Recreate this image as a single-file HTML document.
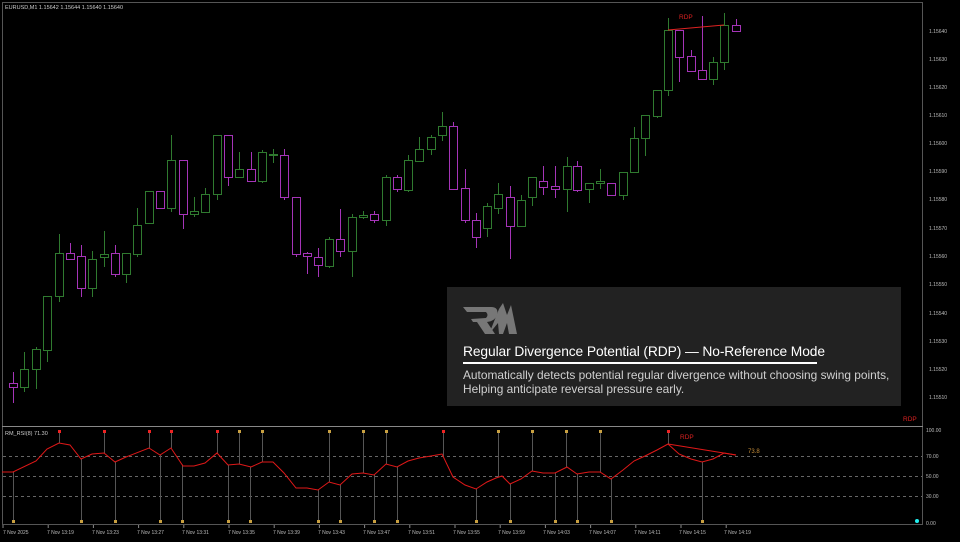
<!DOCTYPE html>
<html><head><meta charset="utf-8"><style>
body{margin:0;background:#000;width:960px;height:542px;overflow:hidden;font-family:"Liberation Sans",sans-serif}
svg{position:absolute;left:0;top:0}
.box{position:absolute;left:447px;top:287px;width:454px;height:119px;background:#222}
.t{position:absolute;left:16px;top:57px;color:#fff;font-size:13.8px;letter-spacing:-0.1px;white-space:nowrap}
.u{position:absolute;left:16px;top:75px;width:354px;height:2px;background:#fff}
.d{position:absolute;left:16px;top:81px;color:#d0d0d0;font-size:11.9px;line-height:14px;white-space:nowrap}
</style></head><body>
<svg id="s" width="960" height="542" font-family="Liberation Sans, sans-serif">
<rect x="2.5" y="2.5" width="920" height="522" fill="none" stroke="#555"/>
<line x1="2" y1="426.5" x2="923" y2="426.5" stroke="#888"/>
<text x="5" y="9" fill="#ccc" font-size="5.5">EURUSD,M1  1.15642 1.15644 1.15640 1.15640</text>
<text x="5" y="435" fill="#ccc" font-size="5.5">RM_RSI(8) 71.30</text>
<g fill="#bbb" font-size="5">
<text x="929" y="33">1.15640</text><text x="929" y="61">1.15630</text><text x="929" y="89">1.15620</text><text x="929" y="117">1.15610</text><text x="929" y="145">1.15600</text><text x="929" y="173">1.15590</text><text x="929" y="201">1.15580</text><text x="929" y="230">1.15570</text><text x="929" y="258">1.15560</text><text x="929" y="286">1.15550</text><text x="929" y="315">1.15540</text><text x="929" y="343">1.15530</text><text x="929" y="371">1.15520</text><text x="929" y="399">1.15510</text>
<text x="926" y="432">100.00</text><text x="926" y="458">70.00</text><text x="926" y="478">50.00</text><text x="926" y="498">30.00</text><text x="926" y="525">0.00</text>
<text x="3" y="534">7 Nov 2025</text><text x="47" y="534">7 Nov 13:19</text><text x="92" y="534">7 Nov 13:23</text><text x="137" y="534">7 Nov 13:27</text><text x="182" y="534">7 Nov 13:31</text><text x="228" y="534">7 Nov 13:35</text><text x="273" y="534">7 Nov 13:39</text><text x="318" y="534">7 Nov 13:43</text><text x="363" y="534">7 Nov 13:47</text><text x="408" y="534">7 Nov 13:51</text><text x="453" y="534">7 Nov 13:55</text><text x="498" y="534">7 Nov 13:59</text><text x="543" y="534">7 Nov 14:03</text><text x="589" y="534">7 Nov 14:07</text><text x="634" y="534">7 Nov 14:11</text><text x="679" y="534">7 Nov 14:15</text><text x="724" y="534">7 Nov 14:19</text>
</g>
<g stroke="#666" stroke-dasharray="3,3"><line x1="3" y1="456.5" x2="922" y2="456.5"/><line x1="3" y1="476.5" x2="922" y2="476.5"/><line x1="3" y1="496.5" x2="922" y2="496.5"/></g>
<g id="c"></g>
<line x1="668" y1="30" x2="724" y2="25" stroke="#d22" stroke-width="1"/>
<text x="679" y="19" fill="#d22" font-size="6.5">RDP</text>
<text x="903" y="421" fill="#d22" font-size="6.5">RDP</text>
<text x="680" y="439" fill="#d22" font-size="6.5">RDP</text>
<text x="748" y="453" fill="#c9903a" font-size="6">73.8</text>
<circle cx="917" cy="521" r="2" fill="#2ee"/>
</svg>
<div class="box">
<svg width="60" height="36" style="left:14px;top:14px"><g fill="#777"><path d="M2 6 L30 6 Q38 6 36 14 Q34 20 26 21 L34 33 L24 33 L16 21 L12 21 L10 18 L25 17 Q28 14 25 11 L6 11 Z"/><path d="M28 33 L38 8 L42 2 L46 14 L50 4 L56 33 L48 33 L46 22 L42 33 L38 33 L37 22 Z"/></g></svg>
<div class="t">Regular Divergence Potential (RDP) — No-Reference Mode</div>
<div class="u"></div>
<div class="d">Automatically detects potential regular divergence without choosing swing points,<br>Helping anticipate reversal pressure early.</div>
</div>
<script>
var C=[[13,383,387,372,403,0],[24,369,387,352,392,1],[36,349,369,347,389,1],[47,296,350,296,362,1],[59,253,296,234,302,1],[70,253,259,243,259,0],[81,256,288,245,297,0],[92,259,288,251,297,1],[104,254,257,231,267,1],[115,253,274,245,277,0],[126,253,274,253,283,1],[137,225,254,208,257,1],[149,191,223,191,223,1],[160,191,208,191,208,0],[171,160,208,135,212,1],[183,160,214,160,229,0],[194,211,214,197,217,1],[205,194,212,188,212,1],[217,135,194,135,200,1],[228,135,177,135,186,0],[239,169,177,152,177,1],[251,169,181,152,181,0],[262,152,181,150,183,1],[273,154,155,149,163,1],[284,155,197,149,200,0],[296,197,254,197,257,0],[307,253,256,252,274,0],[318,257,265,248,277,0],[329,239,266,237,268,1],[340,239,251,209,257,0],[352,217,251,214,277,1],[363,215,217,211,219,1],[374,214,220,211,223,0],[386,177,220,175,226,1],[397,177,189,175,192,0],[408,160,190,155,192,1],[419,149,161,137,161,1],[431,137,149,135,155,1],[442,126,135,112,141,1],[453,126,189,122,189,0],[465,188,220,169,223,0],[476,220,237,213,248,0],[487,206,228,203,237,1],[498,194,208,183,214,1],[510,197,226,186,259,0],[521,200,226,195,226,1],[532,177,197,177,206,1],[543,181,187,166,195,0],[555,186,189,166,198,0],[567,166,189,157,212,1],[577,166,190,161,192,0],[589,183,189,183,203,1],[600,181,183,169,189,1],[611,183,195,183,195,0],[623,172,195,172,200,1],[634,138,172,127,172,1],[645,115,138,115,156,1],[657,90,116,90,118,1],[668,30,90,18,96,1],[679,30,57,30,82,0],[691,56,71,50,71,0],[702,70,79,16,79,0],[713,62,79,57,85,1],[724,25,62,13,70,1],[736,25,31,19,31,0]];
var h='';C.forEach(function(c){var col=c[5]?'#2f7a2f':'#a534b8';h+='<line x1="'+(c[0]+.5)+'" y1="'+c[3]+'" x2="'+(c[0]+.5)+'" y2="'+c[4]+'" stroke="'+col+'"/><rect x="'+(c[0]-3.5)+'" y="'+(c[1]+.5)+'" width="8" height="'+Math.max(1,c[2]-c[1])+'" fill="#000" stroke="'+col+'"/>';});
var R=[[2,472],[13,472],[36,461],[47,449],[59,443],[70,445],[81,459],[92,454],[104,453],[115,462],[126,457],[149,448],[160,455],[171,448],[183,466],[194,466],[205,463],[217,453],[228,465],[239,464],[251,467],[262,462],[273,462],[284,473],[296,488],[307,488],[318,490],[329,482],[340,485],[352,474],[363,473],[374,475],[386,464],[397,467],[408,461],[419,458],[431,456],[442,454],[453,477],[465,485],[476,489],[487,482],[496,478],[502,476],[510,484],[521,479],[532,471],[543,473],[555,473],[567,467],[577,474],[589,472],[600,472],[611,479],[623,470],[634,461],[645,456],[657,450],[668,444],[679,454],[691,459],[702,462],[713,459],[724,453],[736,455]];
function ry(x){for(var i=1;i<R.length;i++)if(R[i][0]>=x){var a=R[i-1],b=R[i];return a[1]+(b[1]-a[1])*(x-a[0])/(b[0]-a[0]||1);}return 460;}
var top1=[[59,'#e22'],[104,'#e22'],[149,'#e22'],[171,'#e22'],[217,'#e22'],[443,'#e22'],[668,'#e22'],[239,'#c9a040'],[262,'#c9a040'],[329,'#c9a040'],[363,'#c9a040'],[386,'#c9a040'],[498,'#c9a040'],[532,'#c9a040'],[566,'#c9a040'],[600,'#c9a040']];
var bot=[13,81,115,160,182,228,250,318,340,374,397,476,510,555,577,611,702];
top1.forEach(function(d){h+='<line x1="'+(d[0]+.5)+'" y1="431" x2="'+(d[0]+.5)+'" y2="'+ry(d[0])+'" stroke="#555"/><rect x="'+(d[0]-1)+'" y="430" width="3" height="3" fill="'+d[1]+'"/>';});
bot.forEach(function(x){h+='<line x1="'+(x+.5)+'" y1="521" x2="'+(x+.5)+'" y2="'+ry(x)+'" stroke="#555"/><rect x="'+(x-1)+'" y="520" width="3" height="3" fill="#c9a040"/>';});
h+='<polyline fill="none" stroke="#e01818" stroke-width="1" points="'+R.map(function(p){return p.join(',')}).join(' ')+'"/>';
h+='<line x1="668" y1="444" x2="736" y2="455" stroke="#e01818"/>';
for(var x=3;x<740;x+=45.2)h+='<line x1="'+x+'" y1="525" x2="'+x+'" y2="528" stroke="#888"/>';
document.getElementById('c').innerHTML=h;
</script>
</body></html>
